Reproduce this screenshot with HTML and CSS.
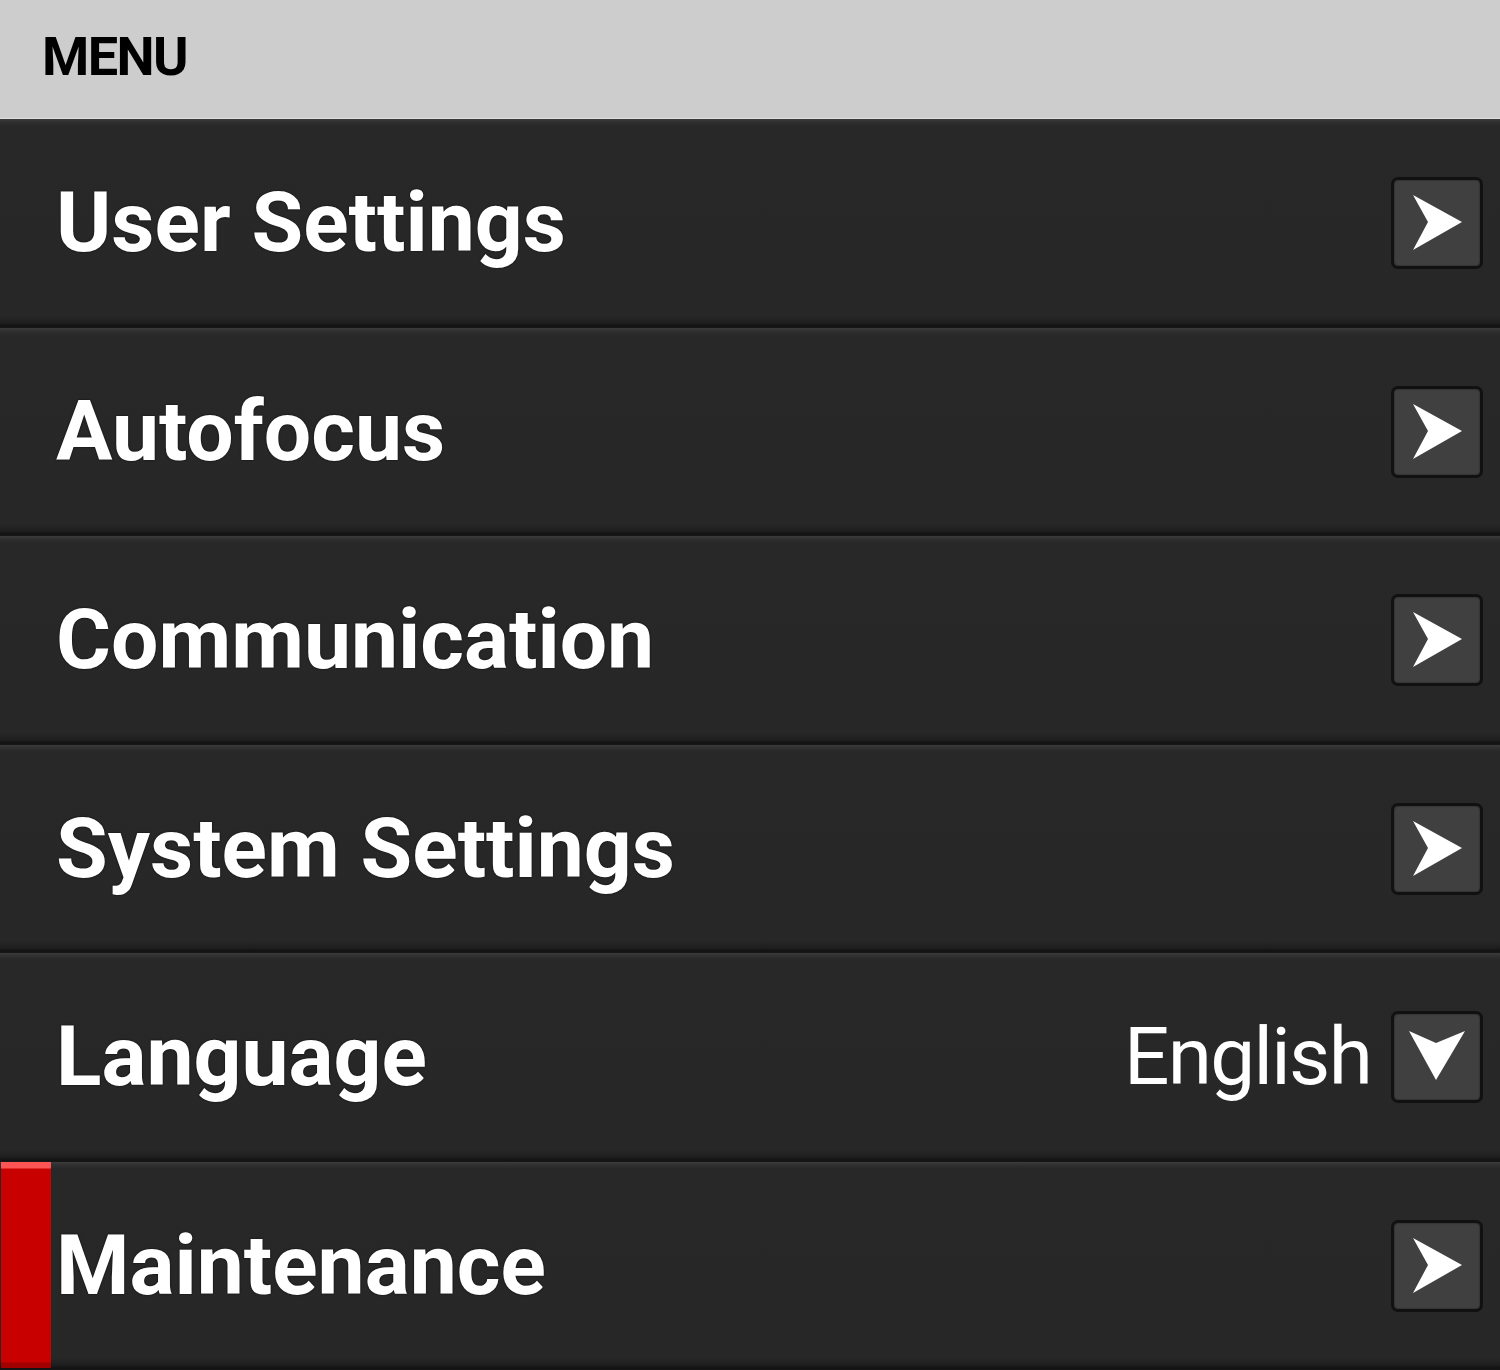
FILE: index.html
```html
<!DOCTYPE html>
<html lang="en">
<head>
<meta charset="utf-8">
<title>Menu</title>
<link rel="stylesheet" href="styles.css">
</head>
<body>
<div class="screen">
  <header class="header"><h1 class="title">MENU</h1></header>
  <ul class="menu">
    <li class="row">
      <span class="label">User Settings</span>
      <span class="btn"><svg viewBox="0 0 92 92" class="icon"><polygon points="22,18 71,45 22,73 37,45"/></svg></span>
    </li>
    <li class="row">
      <span class="label">Autofocus</span>
      <span class="btn"><svg viewBox="0 0 92 92" class="icon"><polygon points="22,18 71,45 22,73 37,45"/></svg></span>
    </li>
    <li class="row">
      <span class="label">Communication</span>
      <span class="btn"><svg viewBox="0 0 92 92" class="icon"><polygon points="22,18 71,45 22,73 37,45"/></svg></span>
    </li>
    <li class="row">
      <span class="label">System Settings</span>
      <span class="btn"><svg viewBox="0 0 92 92" class="icon"><polygon points="22,18 71,45 22,73 37,45"/></svg></span>
    </li>
    <li class="row">
      <span class="label">Language</span>
      <span class="value">English</span>
      <span class="btn"><svg viewBox="0 0 92 92" class="icon"><polygon points="18,20 45,32 74,20 45,69"/></svg></span>
    </li>
    <li class="row row-active">
      <span class="marker"></span>
      <span class="label">Maintenance</span>
      <span class="btn"><svg viewBox="0 0 92 92" class="icon"><polygon points="22,18 71,45 22,73 37,45"/></svg></span>
    </li>
  </ul>
</div>
</body>
</html>
```

FILE: styles.css
```css
html, body {
  margin: 0;
  padding: 0;
}
body {
  width: 1500px;
  height: 1370px;
  overflow: hidden;
  background: #272727;
  font-family: Roboto, "Liberation Sans", Arial, sans-serif;
}
.screen {
  display: flex;
  flex-direction: column;
  height: 1370px;
}
.header {
  height: 119px;
  flex: 0 0 119px;
  background: #cdcdcd;
  border-bottom: 1px solid #dedede;
  display: flex;
  align-items: center;
  padding-left: 42px;
  padding-bottom: 6px;
  box-sizing: border-box;
}
.title {
  margin: 0;
  font-size: 54px;
  font-weight: 700;
  color: #000;
  letter-spacing: -1.6px;
}
.menu {
  list-style: none;
  margin: 0;
  padding: 0;
  flex: 1;
  display: flex;
  flex-direction: column;
}
.row {
  position: relative;
  flex: 1;
  display: flex;
  align-items: center;
  padding: 0 17px 0 56px;
  background: linear-gradient(to bottom,
    #3b3b3b 0px, #303030 3px, #282828 7px,
    #272727 calc(100% - 12px), #1e1e1e calc(100% - 5px), #121212 calc(100% - 2px), #181818 100%);
}
.label {
  flex: 1;
  color: #fff;
  font-size: 84px;
  font-weight: 700;
  letter-spacing: 0px;
  text-shadow: 0 0 2px rgba(0,0,0,0.9);
  line-height: 1;
}
.value {
  color: #fff;
  font-size: 80px;
  font-weight: 400;
  letter-spacing: -1.7px;
  margin-right: 20px;
  line-height: 1;
}
.btn {
  width: 92px;
  height: 92px;
  box-sizing: border-box;
  border: 3px solid #111;
  border-radius: 7px;
  background: #404040;
  box-shadow: inset 0 0 2px rgba(0,0,0,0.6);
  display: flex;
}
.icon {
  width: 92px;
  height: 92px;
  margin: -3px;
}
.icon polygon {
  fill: #fff;
}
.marker {
  position: absolute;
  left: 1px;
  top: 0;
  bottom: 2px;
  width: 50px;
  background: linear-gradient(to bottom, #ff5454 0px, #ff5454 6px, #c80000 7px, #c80000 calc(100% - 6px), #a20000 calc(100% - 5px));
}
```
